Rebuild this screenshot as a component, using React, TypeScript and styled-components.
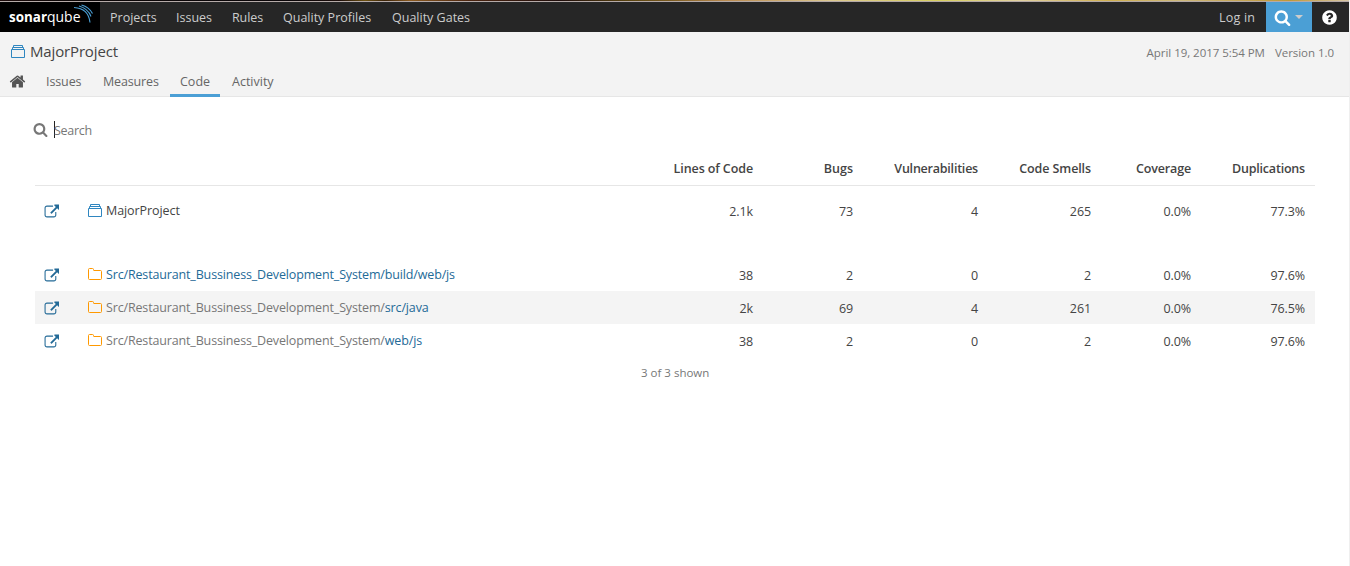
import React from 'react';
import styled, { createGlobalStyle } from 'styled-components';

const Global = createGlobalStyle`
  * { box-sizing: border-box; }
  body { margin: 0; background: #fff; color: #444; font: 12.5px/20px "Open Sans", "Noto Sans", sans-serif; }
`;

const Page = styled.div`
  width: 1350px;
  height: 566px;
  overflow: hidden;
  border-right: 1px solid #efefef;
`;
const Strip = styled.div`
  height: 2px;
  margin-right: -1px;
  border-bottom: 1px solid #b5aaa8;
  background: linear-gradient(90deg, #1c0a0a 0, #0c0606 60px, #0a0508 290px, #1c0d0a 340px, #6b5010 365px, #3a2208 385px, #8a5a20 410px, #4a2410 470px, #200e0c 560px, #5a4410 630px, #7a5a20 670px, #b98a50 725px, #dcc890 830px, #d8cf60 940px, #e0d0a0 1020px, #d0b050 1110px, #cdb87c 1180px, #c09838 1290px, #d8c8a8 1350px);
`;
const TopBar = styled.nav`
  display: flex;
  height: 30px;
  background: #262626;
  color: #ccc;
`;
const Logo = styled.div`
  width: 100px;
  background: #000;
  svg { display: block; }
`;
const NavItem = styled.a<{ $w: number; $ls?: number }>`
  width: ${p => p.$w}px;
  padding-left: 10px;
  line-height: 32px;
  white-space: nowrap;
  letter-spacing: ${p => p.$ls ?? 0}px;
`;
const Spacer = styled.div`flex: 1;`;
const SearchButton = styled.div`
  display: flex;
  align-items: center;
  width: 46px;
  padding-left: 8px;
  gap: 4px;
  background: #4b9fd5;
  color: #fff;
`;
const Caret = styled.span`
  border: 4px solid transparent;
  border-top-color: #ccc;
  border-bottom: 0;
`;
const Help = styled.div`
  display: flex;
  align-items: center;
  justify-content: center;
  width: 37px;
  padding-right: 2px;
  color: #fff;
`;
const Context = styled.header`
  height: 65px;
  background: #f3f3f3;
  border-bottom: 1px solid #e6e6e6;
`;
const ContextTop = styled.div`
  display: flex;
  justify-content: space-between;
  height: 38px;
  padding: 9px 15px 0 11px;
`;
const Title = styled.h1`
  display: flex;
  gap: 5px;
  margin: 0;
  font-size: 15px;
  font-weight: 400;
  line-height: 20px;
  letter-spacing: -0.15px;
  svg { margin-top: 4px; }
`;
const Meta = styled.div`
  display: flex;
  gap: 10px;
  font-size: 11.5px;
  line-height: 24px;
  color: #777;
  letter-spacing: -0.04px;
`;
const Tabs = styled.div`
  display: flex;
  height: 27px;
  color: #666;
`;
const Tab = styled.a<{ $w: number; $active?: boolean; $ls?: number }>`
  width: ${p => p.$w}px;
  padding-left: 10px;
  line-height: 23px;
  white-space: nowrap;
  border-bottom: 3px solid ${p => (p.$active ? '#4b9fd5' : 'transparent')};
  letter-spacing: ${p => p.$ls ?? 0}px;
`;
const HomeTab = styled(Tab)`
  padding-left: 9px;
  color: #555;
  svg { display: block; margin-top: 3px; }
`;
const LastTab = styled(Tab)`margin-left: 2px;`;
const Content = styled.main`padding: 18px 34px 0 35px;`;
const SearchBox = styled.div`
  display: flex;
  align-items: center;
  height: 28px;
  margin-left: -2px;
  color: #777;
`;
const Cursor = styled.span`
  width: 1px;
  height: 17px;
  margin-left: 6px;
  background: #222;
`;
const Placeholder = styled.span`
  margin-left: -1px;
  padding-top: 3px;
  letter-spacing: -0.3px;
`;
const Row = styled.div<{ $h: number; $striped?: boolean; $head?: boolean }>`
  display: grid;
  grid-template-columns: 53px 575px 90px 100px 125px 113px 100px 114px;
  align-items: center;
  height: ${p => p.$h}px;
  padding-top: ${p => (p.$head ? 8 : 0)}px;
  background: ${p => (p.$striped ? '#f4f4f4' : 'transparent')};
  border-bottom: ${p => (p.$head ? '1px solid #e6e6e6' : '0')};
  font-weight: ${p => (p.$head ? 600 : 400)};
`;
const Metric = styled.span<{ $ls?: number }>`
  padding-top: 2px;
  text-align: right;
  white-space: nowrap;
  letter-spacing: ${p => p.$ls ?? -0.1}px;
`;
const LinkCell = styled.span`
  padding: 1px 0 0 9px;
  color: #236a97;
  svg { display: block; }
`;
const NameCell = styled.span<{ $ls: number }>`
  display: flex;
  align-items: center;
  gap: 4px;
  white-space: nowrap;
  letter-spacing: ${p => p.$ls}px;
  svg { margin-top: -2px; }
`;
const Muted = styled.span`color: #777;`;
const Blue = styled.span`color: #236a97;`;
const Gap = styled.div`height: 22px;`;
const Footer = styled.div`
  padding: 6px 0 0 606px;
  font-size: 11.5px;
  color: #777;
`;

const paths = {
  home: 'M1472 992v480q0 26-19 45t-45 19h-384v-384h-256v384h-384q-26 0-45-19t-19-45v-480q0-1 .5-3t.5-3l575-474 575 474q1 2 1 6zm223-69l-62 74q-8 9-21 11h-3q-13 0-21-7l-692-577-692 577q-12 8-24 7-13-2-21-11l-62-74q-8-10-7-23.5t11-21.5l719-599q32-26 76-26t76 26l244 204v-195q0-14 9-23t23-9h192q14 0 23 9t9 23v408l219 182q10 8 11 21.5t-7 23.5z',
  search: 'M1216 832q0-185-131.5-316.5t-316.5-131.5-316.5 131.5-131.5 316.5 131.5 316.5 316.5 131.5 316.5-131.5 131.5-316.5zm512 832q0 52-38 90t-90 38q-54 0-90-38l-343-342q-179 124-399 124-143 0-273.5-55.5t-225-150-150-225-55.5-273.5 55.5-273.5 150-225 225-150 273.5-55.5 273.5 55.5 225 150 150 225 55.5 273.5q0 220-124 399l343 343q37 37 37 90z',
  external: 'M1472 992v320q0 119-84.5 203.5t-203.5 84.5h-832q-119 0-203.5-84.5t-84.5-203.5v-832q0-119 84.5-203.5t203.5-84.5h704q14 0 23 9t9 23v64q0 14-9 23t-23 9h-704q-66 0-113 47t-47 113v832q0 66 47 113t113 47h832q66 0 113-47t47-113v-320q0-14 9-23t23-9h64q14 0 23 9t9 23zm384-864v512q0 26-19 45t-45 19-45-19l-176-176-652 652q-10 10-23 10t-23-10l-114-114q-10-10-10-23t10-23l652-652-176-176q-19-19-19-45t19-45 45-19h512q26 0 45 19t19 45z',
  help: 'M1024 1376v-192q0-14-9-23t-23-9h-192q-14 0-23 9t-9 23v192q0 14 9 23t23 9h192q14 0 23-9t9-23zm256-672q0-88-55.5-163t-138.5-116-170-41q-243 0-371 213-15 24 8 42l132 100q7 6 19 6 16 0 25-12 53-68 86-92 34-24 86-24 48 0 85.5 26t37.5 59q0 38-20 61t-68 45q-63 28-115.5 86.5t-52.5 125.5v36q0 14 9 23t23 9h192q14 0 23-9t9-23q0-19 21.5-49.5t54.5-49.5q32-18 49-28.5t46-35 44.5-48 28-60.5 12.5-81zm384 192q0 209-103 385.5t-279.5 279.5-385.5 103-385.5-103-279.5-279.5-103-385.5 103-385.5 279.5-279.5 385.5-103 385.5 103 279.5 279.5 103 385.5z',
};
const Icon = ({ d, size, box = '0 0 1792 1792' }: { d: string; size: number; box?: string }) => (
  <svg width={size} height={size} viewBox={box} fill="currentColor"><path d={d} /></svg>
);
const ProjectIcon = () => (
  <svg width="14" height="13" viewBox="0 0 14 13" fill="none" stroke="#2f86c0">
    <path d="M.5 4.500h13v8H.5zM1.500 4.500v-2h11v2M2.500 2.500v-2h9v2" />
  </svg>
);
const FolderIcon = () => (
  <svg width="14" height="12" viewBox="0 0 14 12" fill="none" stroke="#f90">
    <path d="M.5 1.500q0-1 1-1h3q1 0 1 1v.5q0 .5.5.5h6.500q1 0 1 1v7q0 1-1 1h-11q-1 0-1-1z" />
  </svg>
);

const head: [string, number][] = [['Lines of Code', -0.1], ['Bugs', 0], ['Vulnerabilities', -0.22], ['Code Smells', -0.1], ['Coverage', -0.15], ['Duplications', -0.2]];
const dir = 'Src/Restaurant_Bussiness_Development_System/';
const rows = [
  { base: <Blue>{dir}</Blue>, tail: 'build/web/js', m: ['38', '2', '0', '2', '0.0%', '97.6%'] },
  { base: <Muted>{dir}</Muted>, tail: 'src/java', m: ['2k', '69', '4', '261', '0.0%', '76.5%'] },
  { base: <Muted>{dir}</Muted>, tail: 'web/js', m: ['38', '2', '0', '2', '0.0%', '97.6%'] },
];

export default function App() {
  return (
    <Page>
      <Global />
      <Strip />
      <TopBar>
        <Logo>
          <svg width="100" height="30" viewBox="0 0 100 30">
            <text x="9" y="20" fill="#fff" fontFamily="Open Sans" fontSize="14" fontWeight="700" textLength="38" lengthAdjust="spacingAndGlyphs">sonar</text>
            <text x="47" y="20" fill="#fff" fontFamily="Open Sans" fontSize="14" textLength="33.500" lengthAdjust="spacingAndGlyphs">qube</text>
            <g fill="none" stroke="#4b9fd5" strokeWidth="1.100">
              <path d="M74 5.500C83 6 89 11 90 20.500M79 4Q88 6.500 91 14.500M81.500 3Q89 5 92.500 11.500" />
            </g>
          </svg>
        </Logo>
        <NavItem $w={66}>Projects</NavItem>
        <NavItem $w={56}>Issues</NavItem>
        <NavItem $w={51} $ls={-0.1}>Rules</NavItem>
        <NavItem $w={109}>Quality Profiles</NavItem>
        <NavItem $w={98}>Quality Gates</NavItem>
        <Spacer />
        <NavItem $w={57} $ls={0.2}>Log in</NavItem>
        <SearchButton><Icon d={paths.search} size={17} /><Caret /></SearchButton>
        <Help><Icon d={paths.help} size={17} /></Help>
      </TopBar>
      <Context>
        <ContextTop>
          <Title><ProjectIcon />MajorProject</Title>
          <Meta><span>April 19, 2017 5:54 PM</span><span>Version 1.0</span></Meta>
        </ContextTop>
        <Tabs>
          <HomeTab $w={36}><Icon d={paths.home} size={17} /></HomeTab>
          <Tab $w={57} $ls={-0.1}>Issues</Tab>
          <Tab $w={77} $ls={-0.15}>Measures</Tab>
          <Tab $w={50} $active>Code</Tab>
          <LastTab $w={70}>Activity</LastTab>
        </Tabs>
      </Context>
      <Content>
        <SearchBox><Icon d={paths.search} size={15} /><Cursor /><Placeholder>Search</Placeholder></SearchBox>
        <Row $h={43} $head>
          <span /><span />
          {head.map(([t, ls]) => <Metric key={t} $ls={ls}>{t}</Metric>)}
        </Row>
        <Row $h={50}>
          <LinkCell><Icon d={paths.external} size={15} /></LinkCell>
          <NameCell $ls={-0.08}><ProjectIcon />MajorProject</NameCell>
          {['2.1k', '73', '4', '265', '0.0%', '77.3%'].map((v, i) => <Metric key={i}>{v}</Metric>)}
        </Row>
        <Gap />
        {rows.map((r, i) => (
          <Row key={i} $h={33} $striped={i === 1}>
            <LinkCell><Icon d={paths.external} size={15} /></LinkCell>
            <NameCell $ls={-0.15}><FolderIcon /><span>{r.base}<Blue>{r.tail}</Blue></span></NameCell>
            {r.m.map((v, j) => <Metric key={j}>{v}</Metric>)}
          </Row>
        ))}
        <Footer>3 of 3 shown</Footer>
      </Content>
    </Page>
  );
}
